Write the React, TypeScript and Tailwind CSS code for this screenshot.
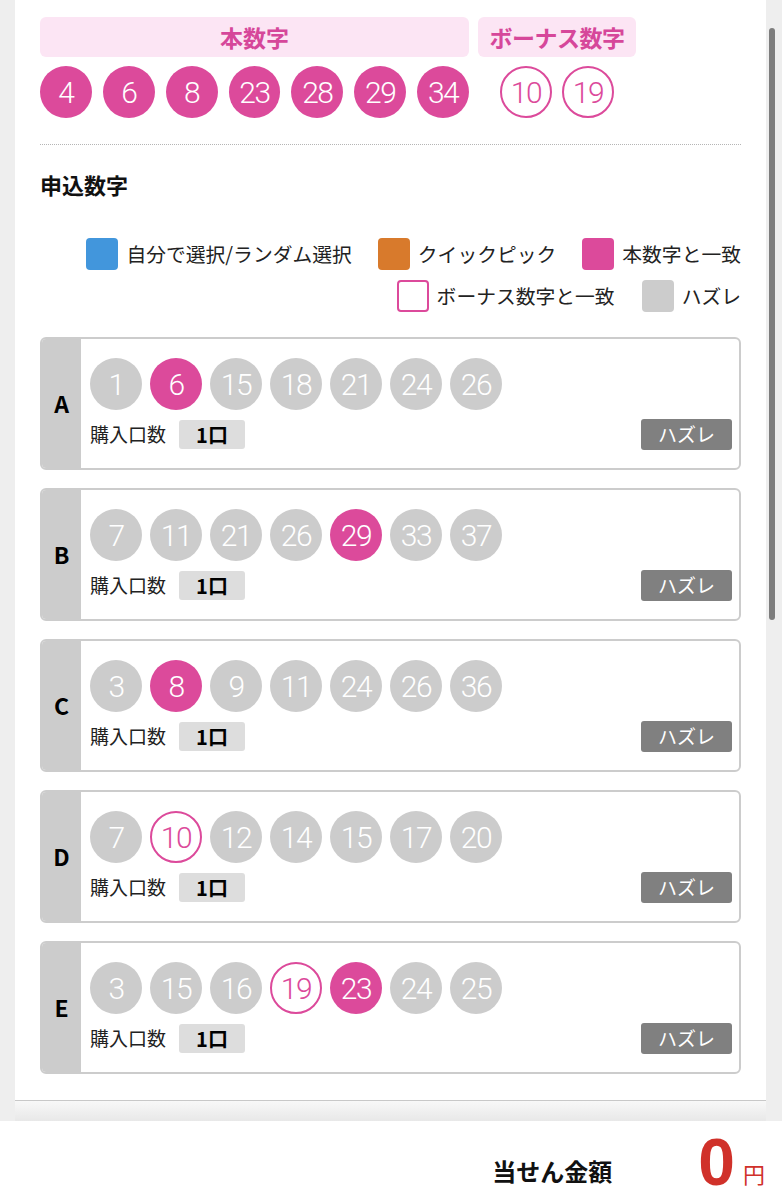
const PINK = "#dc4a9b";

type Kind = "hit" | "bonus" | "miss";

const winning = [4, 6, 8, 23, 28, 29, 34];
const bonus = [10, 19];

const rows: { label: string; nums: number[] }[] = [
  { label: "A", nums: [1, 6, 15, 18, 21, 24, 26] },
  { label: "B", nums: [7, 11, 21, 26, 29, 33, 37] },
  { label: "C", nums: [3, 8, 9, 11, 24, 26, 36] },
  { label: "D", nums: [7, 10, 12, 14, 15, 17, 20] },
  { label: "E", nums: [3, 15, 16, 19, 23, 24, 25] },
];

const kindOf = (n: number): Kind =>
  winning.includes(n) ? "hit" : bonus.includes(n) ? "bonus" : "miss";

const Ball = ({ n, kind }: { n: number; kind: Kind }) => {
  const cls =
    kind === "hit"
      ? "bg-[#dc4a9b] text-white"
      : kind === "bonus"
      ? "bg-white text-[#dc4a9b] border-2 border-[#dc4a9b]"
      : "bg-[#cccccc] text-white";
  return (
    <div
      className={`w-[52px] h-[52px] rounded-full flex items-center justify-center text-[30px] font-light tracking-[-1.5px] ${cls}`}
      style={{ fontFamily: "Roboto, 'Liberation Sans', sans-serif" }}
    >
      {n}
    </div>
  );
};

const Legend = ({ color, label, outline }: { color: string; label: string; outline?: boolean }) => (
  <div className="flex items-center gap-[8px]">
    <div
      className={`w-[32px] h-[32px] rounded-[4px] ${outline ? "border-2 border-[#dc4a9b] bg-white" : ""}`}
      style={outline ? undefined : { backgroundColor: color }}
    />
    <span className="text-[19.8px] text-[#222]">{label}</span>
  </div>
);

const Card = ({ label, nums }: { label: string; nums: number[] }) => (
  <div className="flex h-[133px] border-2 border-[#cccccc] rounded-[6px] overflow-hidden bg-white">
    <div className="w-[39px] bg-[#cccccc] flex items-center justify-center text-[23px] font-bold text-black">
      {label}
    </div>
    <div className="flex-1 pl-[9px] pr-[7px] pt-[19px]">
      <div className="flex gap-[8px]">
        {nums.map((n) => (
          <Ball key={n} n={n} kind={kindOf(n)} />
        ))}
      </div>
      <div className="mt-[9px] flex items-center justify-between">
        <div className="flex items-center gap-[13px]">
          <span className="text-[19px] text-[#222]">購入口数</span>
          <div className="w-[66px] h-[29px] bg-[#dddddd] rounded-[3px] flex items-center justify-center text-[20px] font-bold text-black">
            1口
          </div>
        </div>
        <div className="w-[91px] h-[31px] bg-[#808080] rounded-[3px] flex items-center justify-center text-[19px] text-white">
          ハズレ
        </div>
      </div>
    </div>
  </div>
);

export default function App() {
  return (
    <div
      className="w-[782px] h-[1200px] flex flex-col bg-[#eeeeee] overflow-hidden"
      style={{ fontFamily: "'Noto Sans CJK JP', 'Liberation Sans', sans-serif" }}
    >
      <div className="flex flex-1 min-h-0">
        <div className="w-[15px]" />
        <div className="w-[751px] flex flex-col">
          <div className="bg-white px-[25px] pt-[17px] pb-[26px]">
            <div className="flex gap-[9px]">
              <div className="w-[429px]">
                <div className="h-[40px] rounded-[6px] bg-[#fce5f4] flex items-center justify-center text-[23px] font-bold text-[#d6479a]">
                  本数字
                </div>
                <div className="mt-[9px] flex gap-[11px]">
                  {winning.map((n) => (
                    <Ball key={n} n={n} kind="hit" />
                  ))}
                </div>
              </div>
              <div className="w-[158px]">
                <div className="h-[40px] rounded-[6px] bg-[#fce5f4] flex items-center justify-center text-[23px] font-bold text-[#d6479a] tracking-[-0.5px]">
                  ボーナス数字
                </div>
                <div className="mt-[9px] flex gap-[10px] justify-center">
                  {bonus.map((n) => (
                    <Ball key={n} n={n} kind="bonus" />
                  ))}
                </div>
              </div>
            </div>
            <div className="mt-[26px] border-t border-dotted border-[#b5b5b5]" />
            <div className="mt-[23px] text-[22px] font-bold text-[#111]">申込数字</div>
            <div className="mt-[37px] flex flex-col items-end gap-[10px]">
              <div className="flex gap-[26px]">
                <Legend color="#4296dc" label="自分で選択/ランダム選択" />
                <Legend color="#d87a2c" label="クイックピック" />
                <Legend color={PINK} label="本数字と一致" />
              </div>
              <div className="flex gap-[27px]">
                <Legend color="" outline label="ボーナス数字と一致" />
                <Legend color="#cccccc" label="ハズレ" />
              </div>
            </div>
            <div className="mt-[25px] flex flex-col gap-[18px]">
              {rows.map((r) => (
                <Card key={r.label} label={r.label} nums={r.nums} />
              ))}
            </div>
          </div>
          <div className="border-t border-[#c8c8c8] flex-1 bg-gradient-to-b from-[#f8f8f8] to-[#e8e8e8]" />
        </div>
        <div className="w-[16px] pt-[28px] pl-[3px]">
          <div className="w-[6px] h-[592px] rounded-full bg-[#7d7d7d]" />
        </div>
      </div>
      <div className="h-[79px] bg-white flex items-end justify-end pr-[17px] pb-[8px]">
        <span className="text-[24px] font-bold text-[#111] mb-[3px]">当せん金額</span>
        <span
          className="ml-[86px] text-[66px] leading-[60px] font-bold text-[#d0312a]"
          style={{ fontFamily: "'Liberation Sans', sans-serif" }}
        >
          0
        </span>
        <span className="ml-[8px] text-[22px] text-[#d0312a] mb-[2px]">円</span>
      </div>
    </div>
  );
}
